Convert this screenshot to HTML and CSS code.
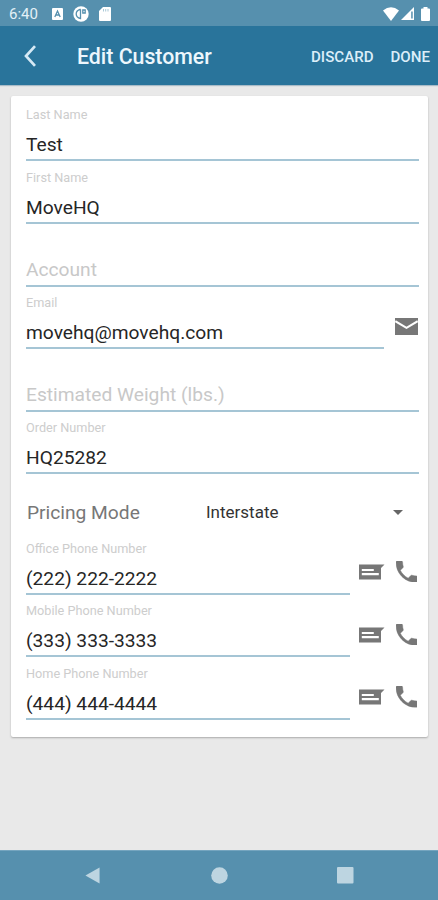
FILE: index.html
```
<!DOCTYPE html>
<html lang="en">
<head>
<meta charset="utf-8">
<title>Edit Customer</title>
<link rel="stylesheet" href="styles.css">
</head>
<body>
<svg width="0" height="0" class="defs" aria-hidden="true">
  <symbol id="message" viewBox="0 0 26 16"><path fill="currentColor" fill-rule="evenodd" d="M0 .5h25.500L22 4v11.500H0zM2.800 5v2h12V5zm0 4v2.200h17V9z"/></symbol>
  <symbol id="phone" viewBox="3 3 18 18"><path fill="currentColor" stroke="currentColor" stroke-width=".4" d="M6.620 10.790c1.440 2.830 3.760 5.140 6.590 6.590l2.200-2.200c.270-.270.670-.360 1.020-.240 1.120.370 2.330.570 3.570.570.550 0 1 .450 1 1V20c0 .550-.450 1-1 1-9.390 0-17-7.610-17-17 0-.550.450-1 1-1h3.500c.550 0 1 .450 1 1 0 1.250.200 2.450.570 3.570.110.350.030.740-.250 1.020z"/></symbol>
</svg>
<div class="screen">
  <div class="status">
    <span class="time">6:40</span>
    <svg class="s-app" viewBox="0 0 11 12"><rect width="11" height="12" rx="1" fill="#fff"/><path d="M2.800 9 5.500 3l2.700 6M4 7h3" fill="none" stroke="#5690ae" stroke-width="1.300"/></svg>
    <svg class="s-circle" viewBox="0 0 16 16"><circle cx="8" cy="8" r="7.700" fill="#fff"/><path d="M7.500 3.200v9.300Q3.200 11.500 3.200 8T7.500 3.200M9.800 4h2.400v3H9.800z" fill="none" stroke="#5690ae" stroke-width="1.300"/></svg>
    <svg class="s-card" viewBox="0 0 12 14"><path d="M4 0h7q1 0 1 1v12q0 1-1 1H1q-1 0-1-1V4z" fill="#fff"/><path d="M4.500 2v2.500M6.700 2v2.500M9 2v2.500" stroke="#a9c8d7"/></svg>
    <svg class="s-wifi" viewBox="0 0 16 14"><path d="M0 3.500Q8-3 16 3.500L8 14z" fill="#fff"/></svg>
    <svg class="s-signal" viewBox="0 0 13 13"><path d="M13 0v13H0z" fill="#fff"/><path d="M10.200 4.500h1.500v7h-1.500z" fill="#5690ae"/></svg>
    <svg class="s-battery" viewBox="0 0 9 14"><path d="M2.500 0h4v1.500H8q1 0 1 1V13q0 1-1 1H1q-1 0-1-1V2.500q0-1 1-1h1.500z" fill="#fff"/></svg>
  </div>
  <header class="bar">
    <svg class="back" viewBox="0 0 13 22"><path d="M11 1.200 2 11l9 9.800" fill="none" stroke="#d5e9f5" stroke-width="2.700"/></svg>
    <h1>Edit Customer</h1>
    <span class="action discard">DISCARD</span>
    <span class="action done">DONE</span>
  </header>
  <main class="card">
    <div class="row"><div class="field"><label>Last Name</label><div class="value">Test</div></div></div>
    <div class="row"><div class="field"><label>First Name</label><div class="value">MoveHQ</div></div></div>
    <div class="row"><div class="field"><div class="value hint">Account</div></div></div>
    <div class="row"><div class="field"><label>Email</label><div class="value">movehq@movehq.com</div></div>
      <div class="icons mail"><svg viewBox="0 0 23 17"><path fill="currentColor" d="M0 0h23v17H0z"/><path d="m.3 3.200 11.200 6.600L22.700 3.200" fill="none" stroke="#fff" stroke-width="2"/></svg></div></div>
    <div class="row"><div class="field"><div class="value hint">Estimated Weight (lbs.)</div></div></div>
    <div class="row"><div class="field"><label>Order Number</label><div class="value">HQ25282</div></div></div>
    <div class="pricing"><span class="mode">Pricing Mode</span><span class="choice">Interstate</span><svg viewBox="0 0 10 5"><path d="M0 0h10L5 5z" fill="#666"/></svg></div>
    <div class="row"><div class="field"><label>Office Phone Number</label><div class="value">(222) 222-2222</div></div>
      <div class="icons contact"><svg class="message"><use href="#message"/></svg><svg class="phone"><use href="#phone"/></svg></div></div>
    <div class="row"><div class="field"><label>Mobile Phone Number</label><div class="value">(333) 333-3333</div></div>
      <div class="icons contact"><svg class="message"><use href="#message"/></svg><svg class="phone"><use href="#phone"/></svg></div></div>
    <div class="row"><div class="field"><label>Home Phone Number</label><div class="value">(444) 444-4444</div></div>
      <div class="icons contact"><svg class="message"><use href="#message"/></svg><svg class="phone"><use href="#phone"/></svg></div></div>
  </main>
  <nav class="nav">
    <svg viewBox="0 0 16 18"><path d="M15.500.5v17L.5 9z" fill="#bdd5e1"/></svg>
    <svg viewBox="0 0 16 16"><circle cx="8" cy="8" r="7.800" fill="#bdd5e1"/></svg>
    <svg viewBox="0 0 17 17"><rect width="16.500" height="16.500" rx="1" fill="#bdd5e1"/></svg>
  </nav>
</div>
</body>
</html>
```
FILE: styles.css
```
* { box-sizing: border-box; }
body { margin: 0; font-family: Roboto, "Liberation Sans", sans-serif; }
svg { display: block; flex: none; }
.defs { display: none; }
.screen { width: 438px; height: 900px; display: flex; flex-direction: column; background: #e9e9e9; overflow: hidden; }

.status { height: 26px; flex: none; display: flex; align-items: center; background: #5690ae; padding: 1px 8px 0 9px; }
.time { width: 43px; font-size: 15px; color: #e3f0f7; }
.s-app { width: 11px; height: 12px; }
.s-circle { width: 16px; height: 16px; margin-left: 10px; }
.s-card { width: 12px; height: 14px; margin-left: 10px; }
.s-wifi { width: 16px; height: 14px; margin-left: auto; }
.s-signal { width: 13px; height: 13px; margin-left: 2px; }
.s-battery { width: 9px; height: 14px; margin-left: 7px; }

.bar { height: 59px; flex: none; display: flex; align-items: center; background: #29749b; padding: 1px 8px 0 24px; box-shadow: 0 1px 1px #a9bcc8; color: #edf7fd; }
.back { width: 13px; height: 22px; }
h1 { margin: 0 auto 0 40px; padding-top: 1px; font-size: 21.300px; line-height: 30px; font-weight: 500; white-space: nowrap; }
.action { font-size: 15.100px; font-weight: 500; color: #dceef9; padding-top: 1px; }
.done { margin-left: 17px; }

.card { margin: 11px 10.500px 0 11px; height: 641px; flex: none; padding: 2.600px 8.500px 0 15px; background: #fff; border-radius: 2px; box-shadow: 0 1px 2px #aaa; }
.row { display: flex; height: 62.650px; }
.field { flex: 1; display: flex; flex-direction: column; justify-content: flex-end; border-bottom: 2px solid #a5c5d5; white-space: nowrap; }
label { font-size: 12.700px; line-height: 16px; color: #cdcdcd; margin-bottom: 10px; }
.value { font-size: 19.200px; line-height: 24px; color: #262626; height: 26px; }
.hint { color: #c8c8c8; height: 27px; }
.icons { flex: none; display: flex; color: #777; }
.mail { width: 35px; padding: 31px 0 0 11px; }
.mail svg { width: 23px; height: 17px; }
.contact { width: 69px; padding: 29px 0 0 9px; }
.message { width: 26px; height: 16px; margin-top: 3px; }
.phone { width: 21.500px; height: 21.500px; margin-left: 10.500px; }
.pricing { height: 57.500px; display: flex; align-items: center; padding: 18px 16px 0 1px; }
.mode { width: 179px; font-size: 19.200px; color: #777; }
.choice { flex: 1; font-size: 17px; color: #333; }
.pricing svg { width: 10px; height: 5px; }

.nav { height: 50px; margin-top: auto; flex: none; display: flex; align-items: center; justify-content: space-between; padding: 0 84px; background: #5690ae; border-top: 1px solid #75a5bf; }
.nav svg { width: 17px; height: 17px; }
```
